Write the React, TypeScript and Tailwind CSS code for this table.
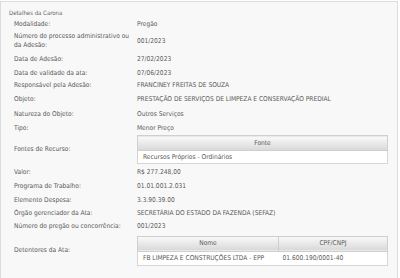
type Row = { label: string; value?: string; h: string; table?: 'fontes' | 'detentores' };

const rows: Row[] = [
  { label: 'Modalidade:', value: 'Pregão', h: 'h-[13px]' },
  { label: 'Número do processo administrativo ou da Adesão:', value: '001/2023', h: 'h-[20px]' },
  { label: 'Data de Adesão:', value: '27/02/2023', h: 'h-[16px]' },
  { label: 'Data de validade da ata:', value: '07/06/2023', h: 'h-[12px]' },
  { label: 'Responsável pela Adesão:', value: 'FRANCINEY FREITAS DE SOUZA', h: 'h-[13px]' },
  { label: 'Objeto:', value: 'PRESTAÇÃO DE SERVIÇOS DE LIMPEZA E CONSERVAÇÃO PREDIAL', h: 'h-[14px]' },
  { label: 'Natureza do Objeto:', value: 'Outros Serviços', h: 'h-[16px]' },
  { label: 'Tipo:', value: 'Menor Preço', h: 'h-[12px]' },
  { label: 'Fontes de Recurso:', h: 'h-[31px]', table: 'fontes' },
  { label: 'Valor:', value: 'R$ 277.248,00', h: 'h-[14px]' },
  { label: 'Programa de Trabalho:', value: '01.01.001.2.031', h: 'h-[15px]' },
  { label: 'Elemento Despesa:', value: '3.3.90.39.00', h: 'h-[13px]' },
  { label: 'Órgão gerenciador da Ata:', value: 'SECRETÁRIA DO ESTADO DA FAZENDA (SEFAZ)', h: 'h-[13px]' },
  { label: 'Número do pregão ou concorrência:', value: '001/2023', h: 'h-[12px]' },
  { label: 'Detentores da Ata:', h: 'h-[37px]', table: 'detentores' },
];

function HeadCell({ children, className = '' }: { children: React.ReactNode; className?: string }) {
  return (
    <th
      className={`h-[15px] border border-[#cfcfcf] bg-gradient-to-b from-[#fafafa] to-[#d8d8d8] text-center font-normal ${className}`}
    >
      {children}
    </th>
  );
}

function FontesTable() {
  return (
    <table className="w-[251px] border-collapse bg-white">
      <thead>
        <tr>
          <HeadCell>Fonte</HeadCell>
        </tr>
      </thead>
      <tbody>
        <tr>
          <td className="h-[13px] border border-[#d6d6d6] px-[5px]">Recursos Próprios - Ordinários</td>
        </tr>
      </tbody>
    </table>
  );
}

function DetentoresTable() {
  return (
    <table className="w-[251px] border-collapse bg-white">
      <thead>
        <tr>
          <HeadCell className="w-[141px]">Nome</HeadCell>
          <HeadCell>CPF/CNPJ</HeadCell>
        </tr>
      </thead>
      <tbody>
        <tr>
          <td className="h-[14px] border-y border-l border-[#d6d6d6] px-[5px]">FB LIMPEZA E CONSTRUÇÕES LTDA - EPP</td>
          <td className="h-[14px] border-y border-r border-[#d6d6d6] px-[4px]">01.600.190/0001-40</td>
        </tr>
      </tbody>
    </table>
  );
}

export default function App() {
  return (
    <div className="h-[278px] w-[400px] overflow-hidden bg-white font-['DejaVu_Sans_Condensed','DejaVu_Sans',sans-serif] text-[6.6px] leading-[9px] text-[#5a5a5a]">
      <div className="mt-px h-[300px] w-[398px] border border-[#dcdcdc] bg-[#f8f8f8]">
        {/* titulo do bloco */}
        <div className="pl-[8px] pt-[6px] text-[6px] text-[#666]">Detalhes da Carona</div>

        <div className="mt-[1px] pl-[13px]">
          {rows.map((r) => (
            <div key={r.label} className={`flex items-center ${r.h}`}>
              <div className="w-[123px] shrink-0 pr-[4px]">{r.label}</div>
              <div className="flex-1 whitespace-nowrap">
                {r.table === 'fontes' && <FontesTable />}
                {r.table === 'detentores' && <DetentoresTable />}
                {!r.table && r.value}
              </div>
            </div>
          ))}
        </div>
      </div>
    </div>
  );
}
